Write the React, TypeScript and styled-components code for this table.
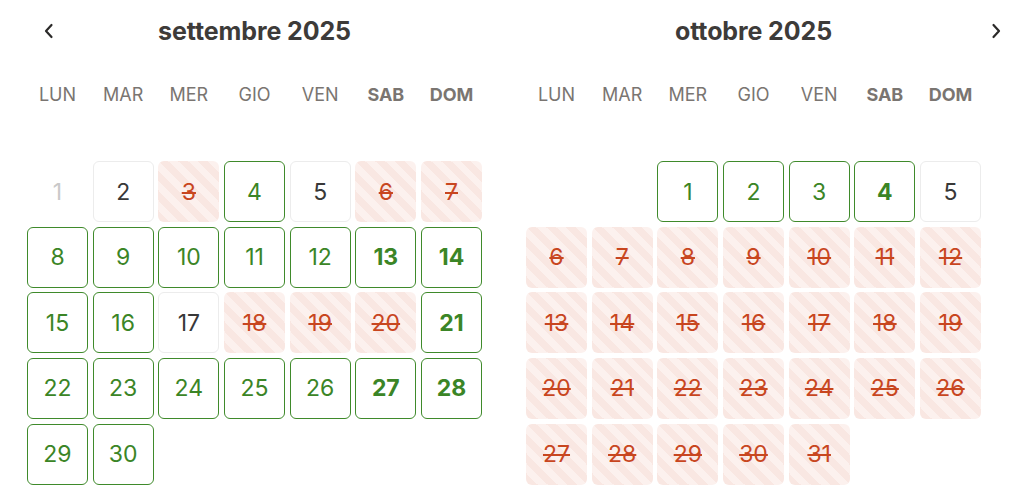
import styled, { createGlobalStyle, css } from "styled-components";

type Kind = "open" | "plain" | "off" | "past" | "empty";

type Day = { n?: number; kind: Kind; bold?: boolean };

const GlobalStyle = createGlobalStyle`
	* { box-sizing: border-box; }
	body {
		margin: 0;
		background: #ffffff;
		font-family: Inter, "Noto Sans", "Liberation Sans", sans-serif;
	}
`;

const WEEKDAYS = ["LUN", "MAR", "MER", "GIO", "VEN", "SAB", "DOM"];

const sep: Day[] = [
	{ n: 1, kind: "past" },
	{ n: 2, kind: "plain" },
	{ n: 3, kind: "off" },
	{ n: 4, kind: "open" },
	{ n: 5, kind: "plain" },
	{ n: 6, kind: "off" },
	{ n: 7, kind: "off" },
	...[8, 9, 10, 11, 12, 13, 14, 15, 16].map((n) => ({ n, kind: "open" as Kind, bold: n === 13 || n === 14 })),
	{ n: 17, kind: "plain" },
	{ n: 18, kind: "off" },
	{ n: 19, kind: "off" },
	{ n: 20, kind: "off" },
	{ n: 21, kind: "open", bold: true },
	...[22, 23, 24, 25, 26, 27, 28, 29, 30].map((n) => ({ n, kind: "open" as Kind, bold: n === 27 || n === 28 })),
];

const oct: Day[] = [
	{ kind: "empty" },
	{ kind: "empty" },
	{ n: 1, kind: "open" },
	{ n: 2, kind: "open" },
	{ n: 3, kind: "open" },
	{ n: 4, kind: "open", bold: true },
	{ n: 5, kind: "plain" },
	...Array.from({ length: 26 }, (_, i) => ({ n: i + 6, kind: "off" as Kind })),
];

function Chevron({ dir }: { dir: "left" | "right" }) {
	return (
		<svg width="10" height="16" viewBox="0 0 10 16" fill="none">
			<path
				d={dir === "left" ? "M7.5 2 L2 8 L7.5 14" : "M2.5 2 L8 8 L2.5 14"}
				stroke="#2b2a29"
				strokeWidth="2.2"
				strokeLinecap="round"
				strokeLinejoin="round"
			/>
		</svg>
	);
}

function Month({ title, days, nav }: { title: string; days: Day[]; nav: "left" | "right" }) {
	return (
		<MonthBox>
			<Header>
				<NavButton $side={nav}>
					<Chevron dir={nav} />
				</NavButton>
				<Title>{title}</Title>
			</Header>
			<WeekRow>
				{WEEKDAYS.map((w, i) => (
					<WeekDay key={w} $bold={i > 4}>
						{w}
					</WeekDay>
				))}
			</WeekRow>
			<Grid>
				{days.map((d, i) => (
					<Cell key={i} $kind={d.kind} $bold={!!d.bold}>
						{d.n}
					</Cell>
				))}
			</Grid>
		</MonthBox>
	);
}

export default function App() {
	return (
		<Wrapper>
			<GlobalStyle />
			<Month title="settembre 2025" days={sep} nav="left" />
			<Month title="ottobre 2025" days={oct} nav="right" />
		</Wrapper>
	);
}

const Wrapper = styled.div`
	display: flex;
	gap: 44px;
	padding-left: 27px;
	width: 1032px;
	height: 492px;
	overflow: hidden;
`;

const MonthBox = styled.div`
	width: 455px;
	display: flex;
	flex-direction: column;
`;

const Header = styled.div`
	position: relative;
	height: 62px;
	display: flex;
	align-items: center;
	justify-content: center;
`;

const NavButton = styled.div<{ $side: "left" | "right" }>`
	position: absolute;
	top: 23px;
	display: flex;
	${(p) =>
		p.$side === "left"
			? css`
					left: 17px;
			  `
			: css`
					right: -20px;
			  `}
`;

const Title = styled.h2`
	margin: 0;
	font-size: 25px;
	font-weight: 700;
	color: #3d3b39;
	letter-spacing: -0.1px;
`;

const WeekRow = styled.div`
	display: grid;
	grid-template-columns: repeat(7, 1fr);
	column-gap: 4.67px;
	height: 42px;
	align-items: center;
	margin-top: 11px;
`;

const WeekDay = styled.div<{ $bold: boolean }>`
	text-align: center;
	font-size: 18px;
	color: #7a7571;
	font-weight: ${(p) => (p.$bold ? 700 : 400)};
`;

const Grid = styled.div`
	margin-top: 46px;
	display: grid;
	grid-template-columns: repeat(7, 1fr);
	grid-auto-rows: 61px;
	gap: 4.67px;
`;

const Cell = styled.div<{ $kind: Kind; $bold: boolean }>`
	display: flex;
	align-items: center;
	justify-content: center;
	border-radius: 6px;
	font-size: 23px;
	font-weight: ${(p) => (p.$bold ? 700 : 400)};
	border: 1px solid transparent;

	${(p) =>
		p.$kind === "open" &&
		css`
			border-color: #3f8a2b;
			color: #3b8526;
		`}
	${(p) =>
		p.$kind === "plain" &&
		css`
			border-color: #ececec;
			color: #383838;
		`}
	${(p) =>
		p.$kind === "past" &&
		css`
			color: #c9c9c9;
		`}
	${(p) =>
		p.$kind === "off" &&
		css`
			color: #c8461f;
			text-decoration: line-through;
			text-decoration-thickness: 2px;
			background: repeating-linear-gradient(
				45deg,
				#f9e7e2 0px,
				#f9e7e2 7px,
				#fcf1ee 7px,
				#fcf1ee 14px
			);
		`}
`;
